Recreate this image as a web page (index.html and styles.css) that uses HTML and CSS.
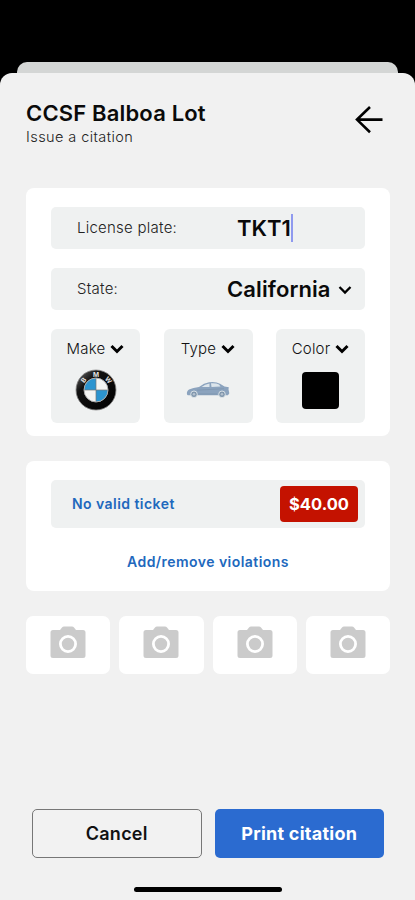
FILE: index.html
```html
<!DOCTYPE html>
<html lang="en">
<head>
<meta charset="utf-8">
<title>Issue a citation</title>
<link rel="stylesheet" href="styles.css">
</head>
<body>
<svg class="defs" aria-hidden="true">
  <symbol id="camera" viewBox="0 0 36 33">
    <path fill="#cbcbcb" d="M3 4h7l2-2.500Q12.800.500 14 .500h8q1.200 0 2 1L26 4h7q2.500 0 2.500 2.500v23Q35.500 32 33 32H3Q.500 32 .500 29.500v-23Q.500 4 3 4z"/>
    <circle cx="18" cy="18" r="7.600" fill="none" stroke="#fff" stroke-width="2.800"/>
  </symbol>
  <symbol id="chevron" viewBox="0 0 14 10">
    <path d="M1.500 2L7 7.500 12.500 2" fill="none" stroke="#000"/>
  </symbol>
</svg>
<div class="screen">
  <div class="sheet-behind"></div>
  <main class="sheet">
    <header class="header">
      <div>
        <h1 class="title">CCSF Balboa Lot</h1>
        <p class="subtitle">Issue a citation</p>
      </div>
      <svg class="back" viewBox="0 0 28 28"><path d="M27.500 13.600H2M15 1L2 13.600l13 12.600" fill="none" stroke="#000" stroke-width="2.600"/></svg>
    </header>

    <section class="card vehicle">
      <div class="field"><span class="label plate-label">License plate:</span><span class="value plate">TKT1</span><span class="caret"></span></div>
      <div class="field"><span class="label state-label">State:</span><span class="value state">California</span><svg class="chevron thin"><use href="#chevron"/></svg></div>
      <div class="tiles">
        <div class="tile">
          <div class="tile-head"><span>Make</span><svg class="chevron"><use href="#chevron"/></svg></div>
          <svg class="emblem" viewBox="0 0 42 42">
            <defs><linearGradient id="rim" x2="1" y2="1"><stop stop-color="#777"/><stop offset=".3" stop-color="#111"/><stop offset="1" stop-color="#000"/></linearGradient></defs>
            <circle cx="21" cy="21" r="20" fill="url(#rim)" stroke="#888" stroke-width=".800"/>
            <circle cx="21" cy="21" r="12" fill="#f4f4f2"/>
            <path d="M21 21V9A12 12 0 0 0 9 21zM21 21v12a12 12 0 0 0 12-12z" fill="#2c94cf"/>
            <path d="M9 21h24M21 9v24" stroke="#777" stroke-width=".700"/>
            <circle cx="21" cy="21" r="12" fill="none" stroke="#aaa"/>
            <g class="emblem-text"><text transform="translate(8.500 11) rotate(-50)" y="2.400">B</text><text x="21" y="7.500">M</text><text transform="translate(33.500 11) rotate(50)" y="2.400">W</text></g>
          </svg>
        </div>
        <div class="tile">
          <div class="tile-head"><span>Type</span><svg class="chevron"><use href="#chevron"/></svg></div>
          <svg class="car" viewBox="0 0 44 18">
            <path fill="#8ba3be" d="M1 13.500Q.300 10.500 3 8.500 7 6.800 13 6 18 1.800 23 1.200q7-.8 11 1.500l4.500 2.800 4.300.7-.3 2 .8 4-1.300 2H1.800z"/>
            <path fill="#dce5eb" d="M15.500 6Q19 3 23.500 2.400V6zM25 2.300q5-.4 8 1.300l1.500 1.900L25.500 6z"/>
            <path d="M11 9.200l27-1.500M12 13h19" stroke="#7890aa" stroke-width=".600" fill="none"/>
            <g fill="#8197ad" stroke="#e0e6ea" stroke-width=".900"><circle cx="8" cy="13.300" r="3.300"/><circle cx="36" cy="13.300" r="3.300"/></g>
            <g fill="#b5c2cf"><circle cx="8" cy="13.300" r="1.300"/><circle cx="36" cy="13.300" r="1.300"/></g>
          </svg>
        </div>
        <div class="tile">
          <div class="tile-head"><span>Color</span><svg class="chevron"><use href="#chevron"/></svg></div>
          <div class="swatch"></div>
        </div>
      </div>
    </section>

    <section class="card violations">
      <div class="violation"><span class="violation-name">No valid ticket</span><span class="fine">$40.00</span></div>
      <div class="edit-link"><span>Add/remove violations</span></div>
    </section>

    <section class="photos">
      <div class="photo"><svg><use href="#camera"/></svg></div>
      <div class="photo"><svg><use href="#camera"/></svg></div>
      <div class="photo"><svg><use href="#camera"/></svg></div>
      <div class="photo"><svg><use href="#camera"/></svg></div>
    </section>

    <footer class="actions">
      <button class="btn cancel">Cancel</button>
      <button class="btn print">Print citation</button>
    </footer>
    <div class="home-bar"></div>
  </main>
</div>
</body>
</html>
```
FILE: styles.css
```css
* { box-sizing: border-box; }
body { margin: 0; background: #000; color: #0a0a0a; font-family: Inter, sans-serif; }
.defs { display: none; }
.screen { width: 415px; height: 900px; padding-top: 62px; display: flex; flex-direction: column; overflow: hidden; }
.sheet-behind { height: 11px; margin: 0 17px; border-radius: 10px 10px 0 0; background: #d4d6d5; }
.sheet { flex: 1; display: flex; flex-direction: column; padding: 0 25px 0 26px; border-radius: 12px 12px 0 0; background: #f1f1f1; }
.header { height: 115px; padding: 26px 6px 0 0; display: flex; justify-content: space-between; align-items: flex-start; }
.title { margin: 0; font-size: 22px; line-height: 28px; font-weight: 600; letter-spacing: .17px; white-space: nowrap; }
.subtitle { margin: 0; font-size: 14.5px; line-height: 19px; font-weight: 300; color: #222; letter-spacing: .42px; }
.back { width: 28px; height: 28px; margin: 7px 1px 0 0; }
.card { background: #fff; border-radius: 8px; padding: 19px 25px 0; }
.vehicle { height: 248px; display: flex; flex-direction: column; gap: 19px; }
.field { height: 42px; display: flex; align-items: center; padding-left: 26px; background: #eff1f1; border-radius: 5px; }
.label { padding-bottom: 1px; font-size: 15px; font-weight: 300; color: #222; letter-spacing: .25px; white-space: nowrap; }
.plate-label { width: 160px; }
.state-label { width: 150px; }
.value { font-size: 22px; font-weight: 600; white-space: nowrap; }
.state { letter-spacing: .1px; }
.caret { width: 2.5px; height: 28px; background: #8f9aef; }
.chevron { width: 14px; height: 10px; margin-top: 2px; stroke-width: 3px; }
.chevron.thin { margin-left: 7px; stroke-width: 2.3px; }
.tiles { display: flex; justify-content: space-between; }
.tile { width: 89px; height: 94px; padding-top: 9px; display: flex; flex-direction: column; align-items: center; background: #eff1f1; border-radius: 6px; }
.tile-head { height: 20px; display: flex; align-items: center; gap: 5px; font-size: 15px; font-weight: 300; color: #111; letter-spacing: .2px; }
.emblem { width: 42px; height: 42px; margin-top: 11px; }
.emblem-text { font: 700 6.500px Inter, sans-serif; fill: #e5e5e5; text-anchor: middle; }
.car { width: 44px; height: 18px; margin-top: 23px; }
.swatch { width: 37px; height: 37px; margin-top: 14px; background: #000; border-radius: 4px; }
.violations { height: 130px; margin-top: 25px; }
.violation { height: 48px; padding: 0 7px 0 21px; display: flex; align-items: center; justify-content: space-between; background: #eff1f1; border-radius: 5px; }
.violation-name, .edit-link { color: #2168bd; font-size: 14px; font-weight: 600; letter-spacing: .45px; }
.violation-name { padding-bottom: 2px; }
.fine { width: 78px; height: 36px; display: flex; align-items: center; justify-content: center; background: #c41200; border-radius: 4px; color: #fff; font-size: 16.5px; font-weight: 700; }
.edit-link { margin-top: 24px; line-height: 20px; text-align: center; }
.photos { margin-top: 25px; display: grid; grid-template-columns: repeat(4, 1fr); gap: 9px; }
.photo { height: 58px; padding-top: 10px; display: flex; justify-content: center; background: #fff; border-radius: 7px; }
.photo svg { width: 36px; height: 33px; }
.actions { margin-top: 135px; padding: 0 6px; display: grid; grid-template-columns: 1fr 1fr; gap: 13px; }
.btn { height: 49px; padding: 0; border: 0; border-radius: 5px; font: 600 18px Inter, sans-serif; color: #111; letter-spacing: .25px; white-space: nowrap; }
.cancel { background: #f2f2f2; border: 1px solid #777; }
.print { background: #2b6bd0; color: #fff; font-weight: 700; }
.home-bar { align-self: center; width: 148px; height: 5px; margin-top: 29px; background: #000; border-radius: 3px; }
```
